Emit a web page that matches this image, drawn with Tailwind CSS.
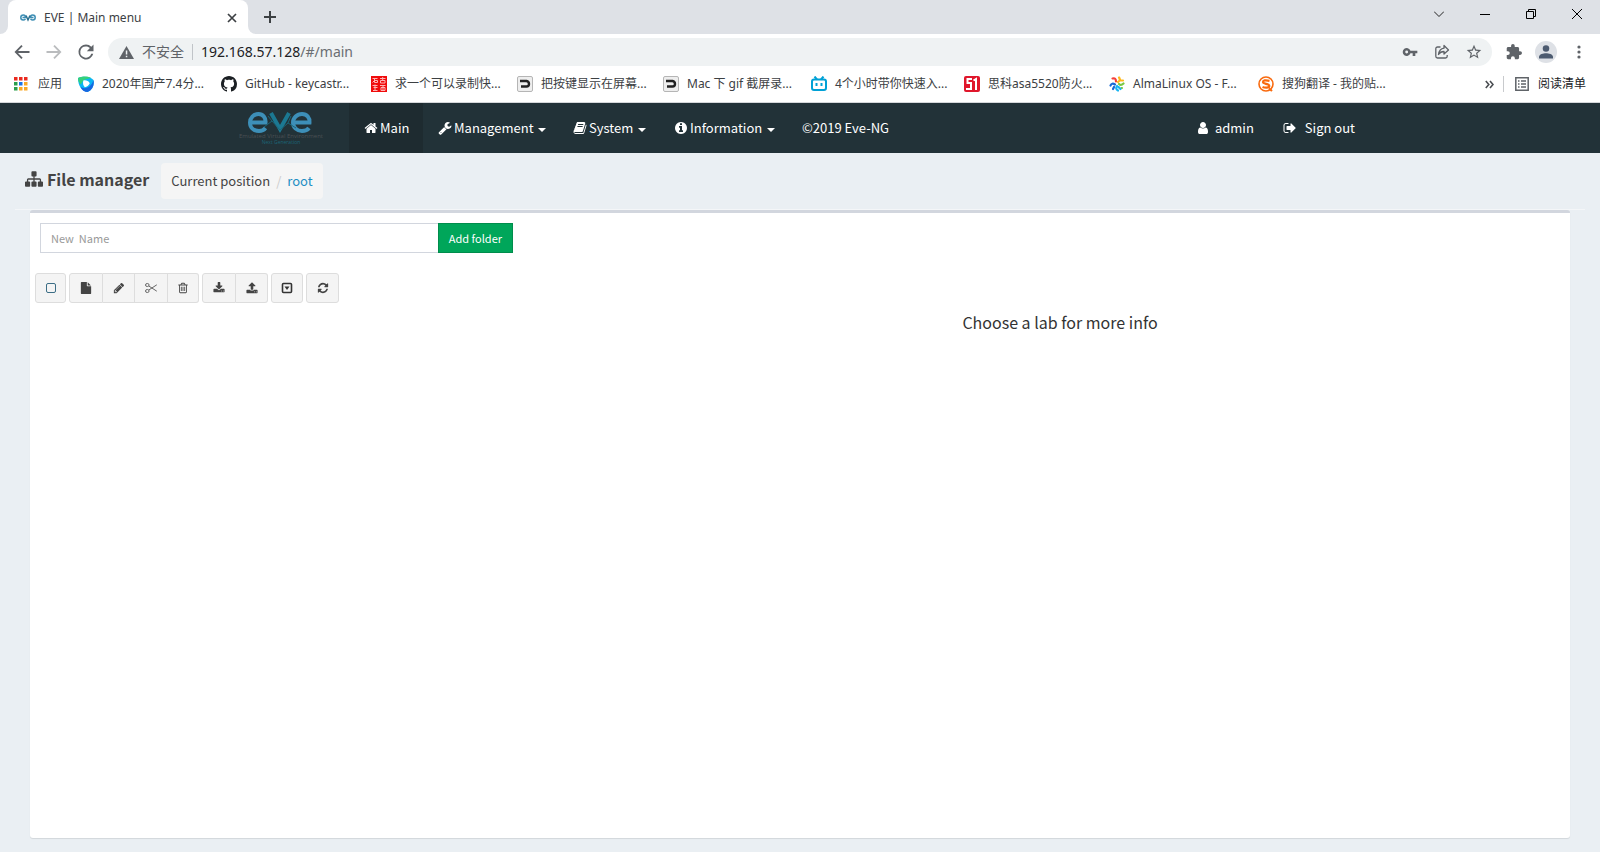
<!DOCTYPE html>
<html lang="zh-CN">
<head>
<meta charset="utf-8">
<title>EVE | Main menu</title>
<script src="https://cdn.jsdelivr.net/npm/@tailwindcss/browser@4"></script>
</head>
<body class="flex min-h-screen flex-col bg-[#eaeff3] font-['Noto_Sans_CJK_SC',sans-serif] text-[#333]">

<!-- Browser window -->
<header class="bg-white font-['Noto_Sans','Noto_Sans_CJK_SC',sans-serif] text-xs text-[#3c4043]">
  <div class="flex h-[34px] items-stretch bg-[#dee1e6]">
    <div class="flex w-2 items-stretch bg-white"><span class="w-full rounded-br-lg bg-[#dee1e6]"></span></div>
    <div class="flex w-60 items-center rounded-t-lg bg-white pt-px pr-2 pl-3">
      <svg class="mr-2 h-4 w-4" viewBox="0 0 16 16" fill="none" stroke="#3f8fb5" stroke-width="1.500"><path d="M2.500 7.500h3C5.500 6 4.800 5 3.400 5 1.700 5 .8 6 .8 7.500S1.800 10 3.200 10c1 0 1.600-.3 2.300-1M13.500 7.500h-3c0-1.500.7-2.500 2.100-2.500 1.700 0 2.600 1 2.600 2.500s-1 2.500-2.400 2.500c-1 0-1.600-.3-2.300-1"/><path stroke="#2a6f8f" d="M6 5.500 8 10l2-4.500"/></svg>
      <span class="flex-1">EVE | Main menu</span>
      <button aria-label="Close tab" class="flex h-4 w-4 items-center justify-center"><svg class="h-[10px] w-[10px]" viewBox="0 0 10 10" stroke="#3c4043" stroke-width="1.700"><path d="M1 1l8 8M9 1 1 9"/></svg></button>
    </div>
    <div class="flex w-2 items-stretch bg-white"><span class="w-full rounded-bl-lg bg-[#dee1e6]"></span></div>
    <button aria-label="New tab" class="flex w-7 items-center justify-center"><svg class="h-3 w-3" viewBox="0 0 12 12" stroke="#3c4043" stroke-width="2"><path d="M6 0v12M0 6h12"/></svg></button>
    <div class="ml-auto flex h-7 text-black">
      <button aria-label="Tab search" class="flex w-[46px] items-center justify-center"><svg class="h-[10px] w-[10px]" viewBox="0 0 10 10" fill="none" stroke="#222"><path d="M0 2.500l5 5 5-5"/></svg></button>
      <button aria-label="Minimise" class="flex w-[46px] items-center justify-center"><svg class="h-[10px] w-[10px]" viewBox="0 0 10 10" stroke="#000"><path d="M0 5.500h10"/></svg></button>
      <button aria-label="Restore" class="flex w-[46px] items-center justify-center"><svg class="h-[10px] w-[10px]" viewBox="0 0 10 10" fill="none" stroke="#000"><path d="M.5 2.500h7v7h-7zM2.500 2.500v-2h7v7h-2"/></svg></button>
      <button aria-label="Close" class="flex w-[46px] items-center justify-center"><svg class="h-[10px] w-[10px]" viewBox="0 0 10 10" stroke="#000"><path d="M0 0l10 10M10 0 0 10"/></svg></button>
    </div>
  </div>

  <div class="flex h-9 items-center pr-[11px] pl-3">
    <button aria-label="Back" class="mr-3 h-5 w-5"><svg viewBox="0 0 24 24" fill="#5f6368"><path d="M21 10.800H7.200l5.600-5.600L11.200 3.600 3 12l8.200 8.400 1.600-1.600-5.600-5.600H21z"/></svg></button>
    <button aria-label="Forward" class="mr-3 h-5 w-5"><svg viewBox="0 0 24 24" fill="#babcbe"><path d="M3 10.800h13.800l-5.600-5.600 1.600-1.600L21 12l-8.200 8.400-1.600-1.600 5.600-5.600H3z"/></svg></button>
    <button aria-label="Reload" class="mr-3 h-5 w-5"><svg viewBox="0 0 24 24" fill="#5f6368"><path d="M18.400 5.700A9 9 0 0 0 12 3a9 9 0 1 0 8.700 11.200h-2.500A6.700 6.700 0 1 1 12 5.300c1.900 0 3.500.8 4.700 2L13 11h8V3z"/></svg></button>
    <div class="flex h-7 flex-1 items-center rounded-full bg-[#eff2f3] pr-[10px] pl-[11px]">
      <svg class="mr-2 h-[15px] w-[15px]" viewBox="0 0 15 15"><path fill="#5f6368" d="M7.500 1 15 14H0z"/><path fill="#eff2f3" d="M6.800 5.500h1.500v4H6.800zM6.800 10.700h1.500v1.500H6.800z"/></svg>
      <span class="text-sm text-[#5f6368]">不安全</span>
      <span class="mx-2 h-4 w-px bg-[#c0c4c8]"></span>
      <div role="textbox" aria-label="Address" contenteditable="true" class="flex-1 text-sm"><span class="text-[#202124]">192.168.57.128</span><span class="text-[#6a6e72]">/#/main</span></div>
      <button aria-label="Passwords" class="mr-4 h-4 w-4"><svg viewBox="0 0 24 24" fill="#5f6368"><path fill-rule="evenodd" d="M12.700 10A6 6 0 1 0 12.700 14H16v4h4v-4h3v-4zM7 14.200a2.200 2.200 0 1 1 0-4.400 2.200 2.200 0 0 1 0 4.400z"/></svg></button>
      <button aria-label="Share" class="mr-4 h-4 w-4"><svg viewBox="0 0 16 16" fill="none" stroke="#5f6368" stroke-width="1.300" stroke-linejoin="round"><path d="M6.500 3H3.500A1.700 1.700 0 0 0 1.800 4.700v7.600A1.700 1.700 0 0 0 3.500 14h8a1.700 1.700 0 0 0 1.700-1.700V11"/><path d="M10 1.500 14.500 6 10 10V7.500C7.300 7.500 5.700 8.500 4.500 10.500 5 7 7 4.600 10 4.200z"/></svg></button>
      <button aria-label="Bookmark" class="h-4 w-4"><svg viewBox="1 1 22 22" fill="#5f6368"><path d="M22 9.240l-7.190-.62L12 2 9.190 8.630 2 9.240l5.460 4.730L5.820 21 12 17.270 18.180 21l-1.630-7.030zM12 15.400l-3.760 2.270 1-4.280-3.320-2.880 4.380-.38L12 6.100l1.710 4.040 4.380.38-3.320 2.880 1 4.280z"/></svg></button>
    </div>
    <button aria-label="Extensions" class="ml-[14px] h-4 w-4"><svg viewBox="1 1 22 22" fill="#5f6368"><path d="M20.500 11H19V7c0-1.100-.9-2-2-2h-4V3.500a2.500 2.500 0 0 0-5 0V5H4c-1.100 0-2 .9-2 2v3.800h1.500a2.700 2.700 0 0 1 0 5.400H2V20c0 1.100.9 2 2 2h3.800v-1.500a2.700 2.700 0 0 1 5.400 0V22H17c1.100 0 2-.9 2-2v-4h1.500a2.500 2.500 0 0 0 0-5z"/></svg></button>
    <button aria-label="Profile" class="ml-[13px] h-[22px] w-[22px] rounded-full bg-[#dee1e6] p-1"><svg viewBox="4 4 16 16" fill="#4d5b70"><circle cx="12" cy="8" r="3.700"/><path d="M4 19.500v-2C4 14.700 9 13.500 12 13.500s8 1.200 8 4v2z"/></svg></button>
    <button aria-label="Menu" class="ml-3 flex h-5 w-5 justify-center"><svg class="h-5 w-5" viewBox="0 0 20 20" fill="#5f6368"><circle cx="10" cy="5" r="1.600"/><circle cx="10" cy="10" r="1.600"/><circle cx="10" cy="15" r="1.600"/></svg></button>
  </div>

  <nav aria-label="Bookmarks" class="flex h-[33px] items-center overflow-hidden border-b border-[#d5d7da] px-[14px] pb-1 whitespace-nowrap">
    <a href="#" class="flex w-16 items-center gap-[10px]"><svg class="h-[14px] w-[14px]" viewBox="0 0 14 14"><path fill="#ea2a1f" d="M0 0h3.500v3.500H0zM5 0h3.500v3.500H5zM10 0h3.500v3.500H10z"/><path fill="#2a9d4b" d="M0 5h3.500v3.500H0zM0 10h3.500v3.500H0z"/><path fill="#1a73e8" d="M5 5h3.500v3.500H5z"/><path fill="#f9a825" d="M10 5h3.500v3.500H10zM5 10h3.500v3.500H5zM10 10h3.500v3.500H10z"/></svg>应用</a>
    <a href="#" class="flex w-[143px] items-center gap-2"><svg class="h-4 w-4" viewBox="0 0 16 16"><path fill="#0bb5f5" d="M0 2C4 0 12 0 15.500 4c1 5-1 10-6 12C4 15 0 10 0 2z"/><path fill="#35d07c" d="M0 2C4 0 11 0 13 2 9 3 5 3 3 8.500 1 7 0 5 0 2z"/><path fill="#1767e0" d="M15.500 4c1 5-1 10-6 12-3 0-6-2-7-5 5 3 11 0 13-7z"/><path fill="#fff" d="M5.300 4.500c3-.5 5 .5 6.500 2.700-1 2.300-3 3.800-5 4C5 9.500 4.700 7 5.300 4.500z"/></svg>2020年国产7.4分...</a>
    <a href="#" class="flex w-[150px] items-center gap-2"><svg class="h-4 w-4" viewBox="0 0 16 16" fill="#1b1f23"><path d="M8 0C3.580 0 0 3.580 0 8c0 3.540 2.290 6.530 5.470 7.590.4.070.55-.17.55-.38 0-.19-.01-.82-.01-1.490-2.010.37-2.530-.49-2.690-.94-.09-.23-.48-.94-.82-1.130-.28-.15-.68-.52-.01-.53.63-.01 1.080.58 1.230.82.72 1.210 1.870.87 2.330.66.07-.52.28-.87.51-1.070-1.780-.2-3.640-.89-3.640-3.950 0-.87.31-1.590.82-2.150-.08-.2-.36-1.020.08-2.120 0 0 .67-.21 2.200.82.64-.18 1.320-.27 2-.27s1.360.09 2 .27c1.530-1.040 2.200-.82 2.200-.82.44 1.100.16 1.920.08 2.120.51.56.82 1.270.82 2.150 0 3.070-1.870 3.750-3.650 3.950.29.25.54.73.54 1.480 0 1.070-.01 1.930-.01 2.200 0 .21.15.46.55.38A8.010 8.010 0 0 0 16 8c0-4.420-3.580-8-8-8z"/></svg>GitHub - keycastr...</a>
    <a href="#" class="flex w-[146px] items-center gap-2"><svg class="h-4 w-4" viewBox="0 0 16 16"><path fill="#f00b0b" d="M0 0h16v16H0z"/><path fill="none" stroke="#ffb3b3" d="M1.500 2.500h5M3.500 2.500v4h3v-2h-3M1.500 6.500l2-2M9 2.500h5.500M9.500 4.500h4.500v2.500h-4.500zM11.700 1v3M1.500 9.500h5M2.500 11.500h4M4 8.500v6M2 14.500h4.500M9 9.500h5.500M10 11.500h4v3h-4zM12 9v5"/></svg>求一个可以录制快...</a>
    <a href="#" class="flex w-[146px] items-center gap-2"><svg class="h-4 w-4" viewBox="0 0 16 16"><rect x=".5" y=".5" width="15" height="15" rx="1.500" fill="#eee" stroke="#b5b5b5"/><path fill="none" stroke="#222" stroke-width="2.400" stroke-linejoin="round" d="M3 5h6.500q2.500.5 2.500 3t-2.500 2.500H4"/></svg>把按键显示在屏幕...</a>
    <a href="#" class="flex w-[148px] items-center gap-2"><svg class="h-4 w-4" viewBox="0 0 16 16"><rect x=".5" y=".5" width="15" height="15" rx="1.500" fill="#eee" stroke="#b5b5b5"/><path fill="none" stroke="#222" stroke-width="2.400" stroke-linejoin="round" d="M3 5h6.500q2.500.5 2.500 3t-2.500 2.500H4"/></svg>Mac 下 gif 截屏录...</a>
    <a href="#" class="flex w-[153px] items-center gap-2"><svg class="h-4 w-4" viewBox="0 0 16 16" fill="none" stroke="#00a1d6" stroke-width="2"><rect x="1" y="3.500" width="14" height="10.500" rx="2"/><path d="M3.500.5l2.500 3M12.500.5l-2.500 3M5.500 7v3M10.500 7v3"/></svg>4个小时带你快速入...</a>
    <a href="#" class="flex w-[145px] items-center gap-2"><svg class="h-4 w-4" viewBox="0 0 16 16"><rect width="16" height="16" rx="2" fill="#e0162b"/><path fill="none" stroke="#fff" stroke-width="2" d="M8 3H3.500v4H7v6H2M9.500 4.500 12 3v11"/></svg>思科asa5520防火...</a>
    <a href="#" class="flex w-[149px] items-center gap-2"><svg class="h-4 w-4" viewBox="0 0 16 16" fill="none" stroke-width="2.200" stroke-linecap="round"><path stroke="#f5403a" d="M3.500 2.500Q7 1.500 7 5.500"/><path stroke="#ffb81c" d="M10 1.500Q12 4 9 6M14 4.500h-2"/><path stroke="#7ac943" d="M14.500 7.500Q12 10 10 8M12.500 12h.5"/><path stroke="#19b5f1" d="M9 14.500Q6 13 8 10M11.500 13 9.500 11"/><path stroke="#1868d5" d="M1.500 9.500Q3 6.500 6 8.500M4 13l1-2"/></svg>AlmaLinux OS - F...</a>
    <a href="#" class="flex items-center gap-2"><svg class="h-4 w-4" viewBox="0 0 16 16" fill="none" stroke="#f96a0e"><circle cx="8" cy="8" r="7" stroke-width="1.600"/><path stroke-width="2.200" d="M11.500 4.800Q5 3.500 5 6c0 2.200 6.300 1.500 6.300 4 0 2.300-5 1.700-6.800.9M11 12.500l3 2.500"/></svg>搜狗翻译 - 我的贴...</a>
    <button aria-label="More bookmarks" class="ml-auto h-[9px] w-[9px]"><svg viewBox="0 0 9 9" fill="none" stroke="#4a4d51" stroke-width="1.600"><path d="M.8 1l3 3.500-3 3.500M5 1l3 3.500L5 8"/></svg></button>
    <span class="mr-[11px] ml-[9px] h-4 w-px bg-[#c8cacd]"></span>
    <button class="flex items-center gap-[9px] text-[#202124]"><svg class="h-[14px] w-[14px]" viewBox="0 0 14 14" fill="none" stroke="#5f6368" stroke-width="1.500"><path d="M.8.8h12.400v12.400H.8zM3 4h1.500M6 4h5M3 7h1.500M6 7h5M3 10h1.500M6 10h5"/></svg>阅读清单</button>
  </nav>
</header>

<!-- Site navigation -->
<nav aria-label="Main" class="bg-[#223238] text-[13px] leading-5 text-white">
  <div class="mx-auto flex h-[50px] max-w-[1170px] items-stretch justify-between pr-[15px]">
    <div class="flex">
      <a href="#" aria-label="EVE" class="flex w-[134px] pt-2 pl-[23px]">
        <svg class="h-9 w-[88px] overflow-visible" viewBox="0 0 88 36">
          <g fill="none" stroke="#3d8fb8" stroke-width="4"><path d="M13 11.500h14.500C28 7 25 3 20.500 3 15.500 3 12 7 12 11.500c0 5 3.500 8.500 9 8.500 3 0 5-1 6.500-3"/><path d="M56 11.500h15.500C72 7 69 3 64 3c-5 0-9 4-9 8.500 0 5 4 8.500 9 8.500 3 0 5.500-1 7-3"/><path stroke="#1b7892" d="M33 2l9 16 9-16"/></g>
          <path fill="none" stroke="#1b6577" d="M26 16l8-6 8 9 8-7 8 5M30 5l4 5M53 5l-3 7"/>
          <text x="43" y="27" text-anchor="middle" font-family="Open Sans" font-size="6" fill="#4b5054">Emulated Virtual Environment</text>
          <text x="43" y="33" text-anchor="middle" font-family="Open Sans" font-size="5" fill="#1b6577">Next Generation</text>
        </svg>
      </a>
      <a href="#" class="flex w-[74px] items-center bg-[#1e2b30] pl-[15px]"><svg class="mr-[2px] h-[14px] w-[14px]" viewBox="0 0 1792 1792" fill="#fff"><path d="M1472 992v480q0 26-19 45t-45 19h-384v-384h-256v384h-384q-26 0-45-19t-19-45v-480q0-1 .5-3t.5-3l575-474 575 474q1 2 1 6zm223-69l-62 74q-8 9-21 11h-3q-13 0-21-7l-692-577-692 577q-12 8-24 7-13-2-21-11l-62-74q-8-10-7-23.500t11-21.500l719-599q32-26 76-26t76 26l244 204v-195q0-14 9-23t23-9h192q14 0 23 9t9 23v408l219 182q10 8 11 21.500t-7 23.500z"/></svg>Main</a>
      <button class="flex w-[135px] items-center pl-[15px]"><svg class="mr-[2px] h-[14px] w-[14px]" viewBox="0 0 1792 1792" fill="#fff"><path d="M448 1472q0-26-19-45t-45-19-45 19-19 45 19 45 45 19 45-19 19-45zm644-420l-682 682q-37 37-90 37-52 0-91-37l-106-108q-38-36-38-90 0-53 38-91l681-681q39 98 114.500 173.500t173.500 114.500zm634-435q0 39-23 106-47 134-164.500 217.500t-258.500 83.500q-185 0-316.500-131.500t-131.500-316.500 131.500-316.500 316.500-131.500q58 0 121.500 16.500t107.500 46.500q16 11 16 28t-16 28l-293 169v224l193 107q5-3 79-48.500t135.500-81 70.500-35.500q15 0 23.500 10t8.500 25z"/></svg>Management<span class="mt-1 ml-1 border-x-4 border-t-4 border-x-transparent border-t-white"></span></button>
      <button class="flex w-[102px] items-center pl-[15px]"><svg class="mr-[2px] h-[14px] w-[14px]" viewBox="0 0 1792 1792" fill="#fff"><path d="M1703 478q40 57 18 129l-275 906q-19 64-76.500 107.500t-122.500 43.500h-923q-77 0-148.500-53.500t-99.500-131.500q-24-67-2-127 0-4 3-27t4-37q1-8-3-21.500t-3-19.500q2-11 8-21t16.500-23.500 16.500-23.500q23-38 45-91.500t30-91.500q3-10 .5-30t-.5-28q3-11 17-28t17-23q21-36 42-92t25-90q1-9-2.500-32t.5-28q4-13 22-30.500t22-22.500q19-26 42.500-84.500t27.500-96.500q1-8-3-25.500t-2-26.500q2-8 9-18t18-23 17-21q8-12 16.500-30.500t15-35 16-36 19.500-32 26.500-23.500 36-11.500 47.500 5.500l-1 3q38-9 51-9h761q74 0 114 56t18 130l-274 906q-36 119-71.500 153.500t-128.500 34.500h-869q-27 0-38 15-11 16-1 43 24 70 144 70h923q29 0 56-15.500t35-41.500l300-987q7-22 5-57 38 15 59 43zm-1064 2q-4 13 2 22.500t20 9.500h608q13 0 25.500-9.500t16.500-22.500l21-64q4-13-2-22.500t-20-9.500h-608q-13 0-25.500 9.500t-16.500 22.500zm-83 256q-4 13 2 22.500t20 9.500h608q13 0 25.500-9.500t16.500-22.500l21-64q4-13-2-22.500t-20-9.500h-608q-13 0-25.500 9.500t-16.500 22.500z"/></svg>System<span class="mt-1 ml-[5px] border-x-4 border-t-4 border-x-transparent border-t-white"></span></button>
      <button class="flex w-[127px] items-center pl-[14px]"><svg class="mr-[2px] h-[14px] w-[14px]" viewBox="0 0 1792 1792" fill="#fff"><path d="M1152 1376v-160q0-14-9-23t-23-9h-96v-512q0-14-9-23t-23-9h-320q-14 0-23 9t-9 23v160q0 14 9 23t23 9h96v320h-96q-14 0-23 9t-9 23v160q0 14 9 23t23 9h448q14 0 23-9t9-23zm-128-896v-160q0-14-9-23t-23-9h-192q-14 0-23 9t-9 23v160q0 14 9 23t23 9h192q14 0 23-9t9-23zm640 416q0 209-103 385.500t-279.500 279.500-385.500 103-385.500-103-279.500-279.500-103-385.500 103-385.500 279.500-279.500 385.500-103 385.500 103 279.500 279.500 103 385.500z"/></svg>Information<span class="mt-1 ml-[5px] border-x-4 border-t-4 border-x-transparent border-t-white"></span></button>
      <a href="#" class="flex items-center px-[15px]">©2019 Eve-NG</a>
    </div>
    <div class="flex">
      <a href="#" class="flex items-center px-[15px]"><svg class="mr-[5px] h-[14px] w-[14px]" viewBox="0 0 1792 1792" fill="#fff"><path d="M1536 1399q0 109-62.500 187t-150.500 78h-854q-88 0-150.500-78t-62.500-187q0-85 8.500-160.500t31.500-152 58.500-131 94-89 134.500-34.500q131 128 313 128t313-128q76 0 134.500 34.500t94 89 58.500 131 31.500 152 8.500 160.500zm-256-887q0 159-112.500 271.500t-271.500 112.500-271.500-112.500-112.500-271.500 112.500-271.500 271.500-112.500 271.500 112.500 112.500 271.500z"/></svg>admin</a>
      <a href="#" class="flex items-center pr-[15px] pl-[14px]"><svg class="mr-2 h-[14px] w-[14px]" viewBox="0 0 1792 1792" fill="#fff"><path d="M704 1440q0 4 1 20t.5 26.500-3 23.500-10 19.500-20.500 6.500h-320q-119 0-203.500-84.500t-84.500-203.500v-704q0-119 84.500-203.500t203.500-84.500h320q13 0 22.500 9.500t9.500 22.500q0 4 1 20t.5 26.500-3 23.500-10 19.500-20.500 6.500h-320q-66 0-113 47t-47 113v704q0 66 47 113t113 47h312l11.500 1 11.500 3 8 5.500 7 9 2 13.500zm928-544q0 26-19 45l-544 544q-19 19-45 19t-45-19-19-45v-288h-448q-26 0-45-19t-19-45v-384q0-26 19-45t45-19h448v-288q0-26 19-45t45-19 45 19l544 544q19 19 19 45z"/></svg>Sign out</a>
    </div>
  </div>
</nav>

<!-- Page heading -->
<div class="mx-[15px] flex h-[57px] items-start border-b border-[#f4f6f8] pt-[10px] pl-[10px]">
  <h1 class="flex items-center gap-1 text-base leading-8 font-bold text-[#444]"><svg class="h-[18px] w-[18px]" viewBox="0 0 1792 1792" fill="#444"><path d="M1792 1248v320q0 40-28 68t-68 28h-320q-40 0-68-28t-28-68v-320q0-40 28-68t68-28h96v-192h-512v192h96q40 0 68 28t28 68v320q0 40-28 68t-68 28h-320q-40 0-68-28t-28-68v-320q0-40 28-68t68-28h96v-192h-512v192h96q40 0 68 28t28 68v320q0 40-28 68t-68 28h-320q-40 0-68-28t-28-68v-320q0-40 28-68t68-28h96v-192q0-52 38-90t90-38h512v-192h-96q-40 0-68-28t-28-68v-320q0-40 28-68t68-28h320q40 0 68 28t28 68v320q0 40-28 68t-68 28h-96v192h512q52 0 90 38t38 90v192h96q40 0 68 28t28 68z"/></svg>File manager</h1>
  <ol class="ml-3 flex items-center rounded bg-[#f5f5f5] px-[10px] py-2 text-[13px] leading-5 text-[#444]">
    <li>Current position</li><li class="px-[6px] text-[#ccc]" aria-hidden="true">/</li><li><a href="#" class="text-[#1f8fc4]">root</a></li>
  </ol>
</div>

<!-- File panel -->
<main class="mx-[30px] mb-[14px] flex-1 rounded-[3px] border-t-3 border-[#d2d6de] bg-white pt-[10px] shadow-[0_1px_1px_rgba(0,0,0,0.1)]">
  <form class="flex h-[30px] w-1/2 max-w-[483px] pl-[10px] text-[11px]">
    <input aria-label="New Name" type="text" placeholder="New  Name" class="min-w-0 flex-1 border border-r-0 border-[#d2d6de] bg-white px-[10px] leading-5 whitespace-pre placeholder:text-[#999]">
    <button type="button" class="border border-[#008d4c] bg-[#00a65a] px-[10px] text-white">Add folder</button>
  </form>
  <div class="mt-5 flex h-[30px] gap-[3px] pl-[5px] [&_button]:flex [&_button]:items-center [&_button]:justify-center [&_button]:border-[#ddd] [&_button]:bg-[#f4f4f4] [&_svg]:h-3 [&_svg]:w-3">
    <button aria-label="Select all" class="w-[31px] rounded-[3px] border"><svg viewBox="0 0 12 12"><rect x="1.500" y="1.500" width="9" height="9" rx="1.500" fill="none" stroke="#3c6e86"/></svg></button>
    <div class="flex">
      <button aria-label="New lab" class="w-[34px] rounded-l-[3px] border"><svg viewBox="0 0 1792 1792" fill="#444"><path d="M1152 512v-472q22 14 36 28l408 408q14 14 28 36h-472zm-128 32q0 40 28 68t68 28h544v1056q0 40-28 68t-68 28h-1344q-40 0-68-28t-28-68v-1600q0-40 28-68t68-28h800v544z"/></svg></button>
      <button aria-label="Rename" class="w-8 border-y border-r"><svg viewBox="0 0 1792 1792" fill="#444"><path d="M491 1536l91-91-235-235-91 91v107h128v128h107zm523-928q0-22-22-22-10 0-17 7l-542 542q-7 7-7 17 0 22 22 22 10 0 17-7l542-542q7-7 7-17zm-54-192l416 416-832 832h-416v-416zm683 96q0 53-37 90l-166 166-416-416 166-165q36-38 90-38 53 0 91 38l235 234q37 39 37 91z"/></svg></button>
      <button aria-label="Move" class="w-[33px] border-y border-r"><svg viewBox="0 0 12 12" fill="none" stroke="#666"><ellipse cx="2.300" cy="3" rx="1.800" ry="1.500"/><ellipse cx="2.300" cy="9" rx="1.800" ry="1.500"/><path d="M3.800 4 11.800 9.200M3.800 8l8-5.200"/></svg></button>
      <button aria-label="Delete" class="w-[31px] rounded-r-[3px] border-y border-r"><svg viewBox="0 0 1792 1792" fill="#444"><path d="M704 736v576q0 14-9 23t-23 9h-64q-14 0-23-9t-9-23v-576q0-14 9-23t23-9h64q14 0 23 9t9 23zm256 0v576q0 14-9 23t-23 9h-64q-14 0-23-9t-9-23v-576q0-14 9-23t23-9h64q14 0 23 9t9 23zm256 0v576q0 14-9 23t-23 9h-64q-14 0-23-9t-9-23v-576q0-14 9-23t23-9h64q14 0 23 9t9 23zm128 724v-948h-896v948q0 22 7 40.500t14.500 27 10.500 8.500h832q3 0 10.500-8.500t14.500-27 7-40.500zm-672-1076h448l-48-117q-7-9-17-11h-317q-10 2-17 11zm928 32v64q0 14-9 23t-23 9h-96v948q0 83-47 143.500t-113 60.500h-832q-66 0-113-58.500t-47-141.500v-952h-96q-14 0-23-9t-9-23v-64q0-14 9-23t23-9h309l70-167q15-37 54-63t79-26h320q40 0 79 26t54 63l70 167h309q14 0 23 9t9 23z"/></svg></button>
    </div>
    <div class="flex">
      <button aria-label="Import" class="w-[34px] rounded-l-[3px] border"><svg viewBox="0 0 1792 1792" fill="#444"><path d="M1344 1344q0-26-19-45t-45-19-45 19-19 45 19 45 45 19 45-19 19-45zm256 0q0-26-19-45t-45-19-45 19-19 45 19 45 45 19 45-19 19-45zm128-224v320q0 40-28 68t-68 28h-1472q-40 0-68-28t-28-68v-320q0-40 28-68t68-28h465l135 136q58 56 136 56t136-56l136-136h464q40 0 68 28t28 68zm-325-569q17 41-14 70l-448 448q-18 19-45 19t-45-19l-448-448q-31-29-14-70 17-39 59-39h256v-448q0-26 19-45t45-19h256q26 0 45 19t19 45v448h256q42 0 59 39z"/></svg></button>
      <button aria-label="Export" class="w-8 rounded-r-[3px] border-y border-r"><svg viewBox="0 0 1792 1792" fill="#444"><path d="M1344 1472q0-26-19-45t-45-19-45 19-19 45 19 45 45 19 45-19 19-45zm256 0q0-26-19-45t-45-19-45 19-19 45 19 45 45 19 45-19 19-45zm128-224v320q0 40-28 68t-68 28h-1472q-40 0-68-28t-28-68v-320q0-40 28-68t68-28h427q21 56 70.500 92t110.500 36h256q61 0 110.500-36t70.500-92h427q40 0 68 28t28 68zm-325-648q-17 40-59 40h-256v448q0 26-19 45t-45 19h-256q-26 0-45-19t-19-45v-448h-256q-42 0-59-40-17-39 14-69l448-448q18-19 45-19t45 19l448 448q31 30 14 69z"/></svg></button>
    </div>
    <button aria-label="More" class="w-8 rounded-[3px] border"><svg viewBox="0 0 12 12"><rect x="1.500" y="1.500" width="9" height="9" rx="1" fill="none" stroke="#333" stroke-width="1.600"/><path fill="#333" d="M3.500 4.500h5L6 8z"/></svg></button>
    <button aria-label="Refresh" class="w-[33px] rounded-[3px] border"><svg viewBox="0 0 1792 1792" fill="#444"><path d="M1639 1056q0 5-1 7-64 268-268 434.500t-478 166.500q-146 0-282.500-55t-243.500-157l-129 129q-19 19-45 19t-45-19-19-45v-448q0-26 19-45t45-19h448q26 0 45 19t19 45-19 45l-137 137q71 66 161 102t187 36q134 0 250-65t186-179q11-17 53-117 8-23 30-23h192q13 0 22.500 9.500t9.500 22.500zm25-800v448q0 26-19 45t-45 19h-448q-26 0-45-19t-19-45 19-45l138-138q-148-137-349-137-134 0-250 65t-186 179q-11 17-53 117-8 23-30 23h-199q-13 0-22.500-9.500t-9.500-22.500v-7q65-268 270-434.500t480-166.500q146 0 284 55.500t245 156.500l130-129q19-19 45-19t45 19 19 45z"/></svg></button>
  </div>
  <div class="flex pt-[7px] pl-[10px]">
    <section class="w-1/3"></section>
    <section class="w-2/3 text-center text-base leading-6"><h2>Choose a lab for more info</h2></section>
  </div>
</main>
</body>
</html>
